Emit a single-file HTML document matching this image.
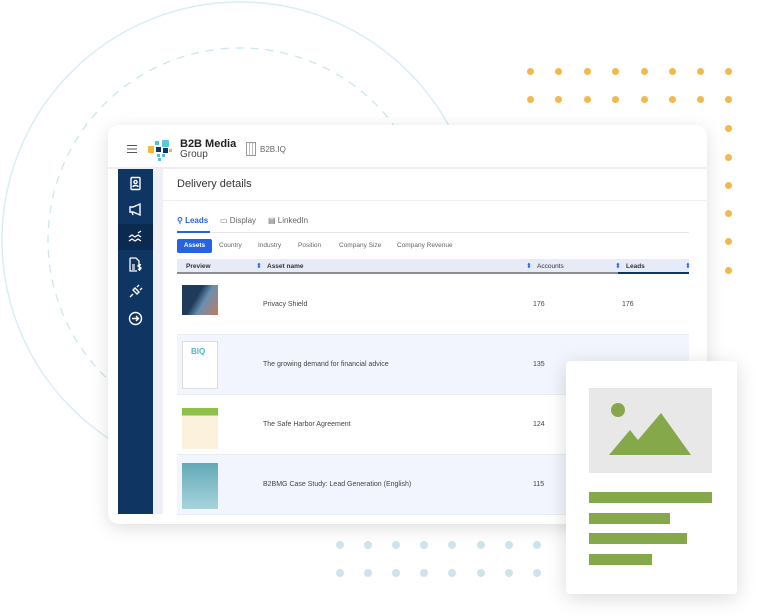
<!DOCTYPE html>
<html><head><meta charset="utf-8"><style>
*{margin:0;padding:0;box-sizing:border-box}
body{width:758px;height:616px;background:#fff;position:relative;overflow:hidden;font-family:"Liberation Sans",sans-serif;color:#333}
.a{position:absolute}
.od{position:absolute;width:7px;height:7px;border-radius:50%;background:#f2b84b}
.bd{position:absolute;width:8px;height:8px;border-radius:50%;background:#cfe3ec}
.card{left:108px;top:125px;width:599px;height:399px;background:#fff;border-radius:11px;box-shadow:0 4px 18px rgba(0,0,0,.13);overflow:hidden}
.sb{left:10px;top:44px;width:35px;height:345px;background:#0f3563}
.ic{position:absolute;left:10px;width:15px;height:15px;color:#fff}
.t{font-size:7px;color:#444}
.row{position:absolute;left:69px;width:512px;height:60px;border-bottom:1px solid #e8ecf3}
.thumb{position:absolute;left:5px;top:6px;width:36px;height:48px}
</style></head><body>
<svg class="a" style="left:0;top:0" width="758" height="616">
<circle cx="240" cy="240" r="238" fill="none" stroke="#d8eef3" stroke-width="1.5"/>
<circle cx="240" cy="240" r="192" fill="none" stroke="#cde6ee" stroke-width="1.3" stroke-dasharray="8 7"/>
</svg>
<div id="dots"></div>
<script>
var h='',xs=[530,558,587,615,644,672,700,728];
xs.forEach(function(x){h+='<div class="od" style="left:'+(x-3)+'px;top:68px"></div><div class="od" style="left:'+(x-3)+'px;top:96px"></div>'});
[128,157,185,213,241,270].forEach(function(y){h+='<div class="od" style="left:725px;top:'+(y-3)+'px"></div>'});
[340,368,396,424,452,481,509,537].forEach(function(x){h+='<div class="bd" style="left:'+(x-4)+'px;top:541px"></div><div class="bd" style="left:'+(x-4)+'px;top:569px"></div>'});
document.getElementById('dots').innerHTML=h;
</script>
<div class="a card">
 <div class="a" style="left:19px;top:20px;width:10px;height:1.3px;background:#555;box-shadow:0 3.5px 0 #555,0 7px 0 #555"></div>
 <svg class="a" style="left:40px;top:13px" width="26" height="24">
  <rect x="0" y="8" width="6" height="7" rx="1" fill="#f4b73d"/><rect x="7" y="3" width="4" height="4" fill="#4cc3d9"/><rect x="8" y="9" width="5" height="5" fill="#0f3563"/><rect x="14" y="2" width="7" height="7" rx="1" fill="#5ac8dc"/><rect x="15" y="10" width="5" height="5" fill="#0f3563"/><rect x="21" y="11" width="3" height="3" fill="#f4b73d"/><rect x="9" y="16" width="3" height="3" fill="#4cc3d9"/><rect x="14" y="16" width="3" height="3" fill="#4cc3d9"/><rect x="10" y="20" width="3" height="3" fill="#4cc3d9"/>
 </svg>
 <div class="a" style="left:72px;top:14px;font-size:11px;font-weight:bold;color:#222;line-height:11px">B2B Media</div>
 <div class="a" style="left:72px;top:25px;font-size:10px;color:#444;line-height:10px">Group</div>
 <div class="a" style="left:138px;top:17px;width:10px;height:14px;border:1px solid #999;background:repeating-linear-gradient(90deg,#fff 0 2px,#bbb 2px 3px)"></div>
 <div class="a" style="left:152px;top:20px;font-size:8px;color:#666">B2B.IQ</div>
 <div class="a" style="left:0;top:42px;width:599px;height:2px;background:#eceef2"></div>
 <div class="a sb">
  <div class="a" style="left:0;top:55px;width:35px;height:26px;background:#0b2a50"></div>
  <svg class="ic" style="top:7px" viewBox="0 0 15 15" fill="none" stroke="#fff" stroke-width="1.4"><rect x="3" y="1.5" width="9" height="12" rx="1"/><circle cx="7.5" cy="6" r="1.6"/><path d="M5 11c0-2 5-2 5 0"/></svg>
  <svg class="ic" style="top:33px" viewBox="0 0 15 15" fill="none" stroke="#fff" stroke-width="1.4"><path d="M2 5h3l7-3v11l-7-3H2zM4 10l1 3"/></svg>
  <svg class="ic" style="top:61px" viewBox="0 0 15 15" fill="none" stroke="#fff" stroke-width="1.3"><path d="M1 7l3-2 3 2 3-2 3 2M1 11l3-2 3 2 3-2 3 2M10 3l3-2"/></svg>
  <svg class="ic" style="top:88px" viewBox="0 0 15 15" fill="none" stroke="#fff" stroke-width="1.3"><path d="M2 1h6l3 3v3M2 1v13h7M4 8h3M4 10h3M4 12h3"/><path d="M13 8c-2-1-3 0-3 1s3 1 3 2-1 2-3 1M11.5 7v7"/></svg>
  <svg class="ic" style="top:115px" viewBox="0 0 15 15" fill="none" stroke="#fff" stroke-width="1.4"><path d="M2 13l3-3M5 6l4 4 2-2-4-4zM9 3l2-2M12 6l2-2"/></svg>
  <svg class="ic" style="top:142px" viewBox="0 0 15 15" fill="none" stroke="#fff" stroke-width="1.4"><circle cx="7.5" cy="7.5" r="6"/><path d="M4 7.5h6M8 5l2.5 2.5L8 10"/></svg>
 </div>
 <div class="a" style="left:45px;top:44px;width:10px;height:345px;background:#eef0f4"></div>
 <div class="a" style="left:69px;top:53px;font-size:11px;color:#333">Delivery details</div>
 <div class="a" style="left:55px;top:75px;width:544px;height:1px;background:#eceef2"></div>
 <div class="a" style="left:69px;top:91px;font-size:8px;font-weight:bold;color:#2563d8">⚲ Leads</div>
 <div class="a" style="left:112px;top:91px;font-size:8px;color:#666">▭ Display</div>
 <div class="a" style="left:160px;top:91px;font-size:8px;color:#666">▤ LinkedIn</div>
 <div class="a" style="left:69px;top:107px;width:512px;height:1px;background:#e3e6ec"></div>
 <div class="a" style="left:69px;top:106px;width:33px;height:2px;background:#2563d8"></div>
 <div class="a" style="left:69px;top:114px;width:35px;height:14px;background:#2563e0;border-radius:2px;color:#fff;font-size:6.5px;font-weight:bold;text-align:center;line-height:14px">Assets</div>
 <div class="a t" style="left:111px;top:117px;font-size:6.5px;color:#666">Country</div>
 <div class="a t" style="left:150px;top:117px;font-size:6.5px;color:#666">Industry</div>
 <div class="a t" style="left:190px;top:117px;font-size:6.5px;color:#666">Position</div>
 <div class="a t" style="left:231px;top:117px;font-size:6.5px;color:#666">Company Size</div>
 <div class="a t" style="left:289px;top:117px;font-size:6.5px;color:#666">Company Revenue</div>
 <div class="a" style="left:69px;top:134px;width:512px;height:15px;background:#e6ebf7;border-bottom:2px solid #8a8d93"></div>
 <div class="a t" style="left:78px;top:138px;font-weight:bold;color:#333;font-size:6.5px">Preview</div>
 <div class="a t" style="left:159px;top:138px;font-weight:bold;color:#333;font-size:6.5px">Asset name</div>
 <div class="a t" style="left:429px;top:138px;color:#333;font-size:6.5px">Accounts</div>
 <div class="a t" style="left:518px;top:138px;font-weight:bold;color:#333;font-size:6.5px">Leads</div>
 <div class="a" style="left:148px;top:137px;font-size:7px;color:#2563e0">⬍</div>
 <div class="a" style="left:418px;top:137px;font-size:7px;color:#2563e0">⬍</div>
 <div class="a" style="left:507px;top:137px;font-size:7px;color:#2563e0">⬍</div>
 <div class="a" style="left:577px;top:137px;font-size:7px;color:#2563e0">⬍</div>
 <div class="a" style="left:510px;top:147px;width:71px;height:2px;background:#0f3563"></div>
 <div class="row" style="top:150px;background:#fff"><div class="thumb" style="top:10px;height:30px;background:linear-gradient(120deg,#1e3c5a 40%,#6b8fb0 60%,#c27a5a)"></div><div class="a t" style="left:86px;top:26px">Privacy Shield</div><div class="a t" style="left:356px;top:26px">176</div><div class="a t" style="left:445px;top:26px">176</div></div>
 <div class="row" style="top:210px;background:#f2f5fd"><div class="thumb" style="background:#fff;border:1px solid #ddd"><div class="a" style="left:8px;top:5px;font-size:8px;color:#4cb8c4;font-weight:bold">BIQ</div></div><div class="a t" style="left:86px;top:26px">The growing demand for financial advice</div><div class="a t" style="left:356px;top:26px">135</div></div>
 <div class="row" style="top:270px;background:#fff"><div class="thumb" style="background:linear-gradient(#fff 15%,#8fc04a 15% 30%,#fbf1dc 30%)"></div><div class="a t" style="left:86px;top:26px">The Safe Harbor Agreement</div><div class="a t" style="left:356px;top:26px">124</div></div>
 <div class="row" style="top:330px;background:#f2f5fd"><div class="thumb" style="top:8px;height:46px;background:linear-gradient(#62a9b6,#a8d4dc)"></div><div class="a t" style="left:86px;top:26px">B2BMG Case Study: Lead Generation (English)</div><div class="a t" style="left:356px;top:26px">115</div></div>
</div>
<div class="a" style="left:566px;top:361px;width:171px;height:233px;background:#fff;border-radius:4px;box-shadow:0 4px 20px rgba(0,0,0,.15)">
 <svg class="a" style="left:23px;top:27px" width="123" height="85"><rect width="123" height="85" fill="#e8e8e8"/><circle cx="29" cy="22" r="7" fill="#85a84a"/><path d="M20 67L41 42L49 52L72 25L102 67Z" fill="#85a84a"/></svg>
 <div class="a" style="left:23px;top:131px;width:123px;height:11px;background:#85a84a"></div>
 <div class="a" style="left:23px;top:152px;width:81px;height:11px;background:#85a84a"></div>
 <div class="a" style="left:23px;top:172px;width:98px;height:11px;background:#85a84a"></div>
 <div class="a" style="left:23px;top:193px;width:63px;height:11px;background:#85a84a"></div>
</div>
</body></html>
